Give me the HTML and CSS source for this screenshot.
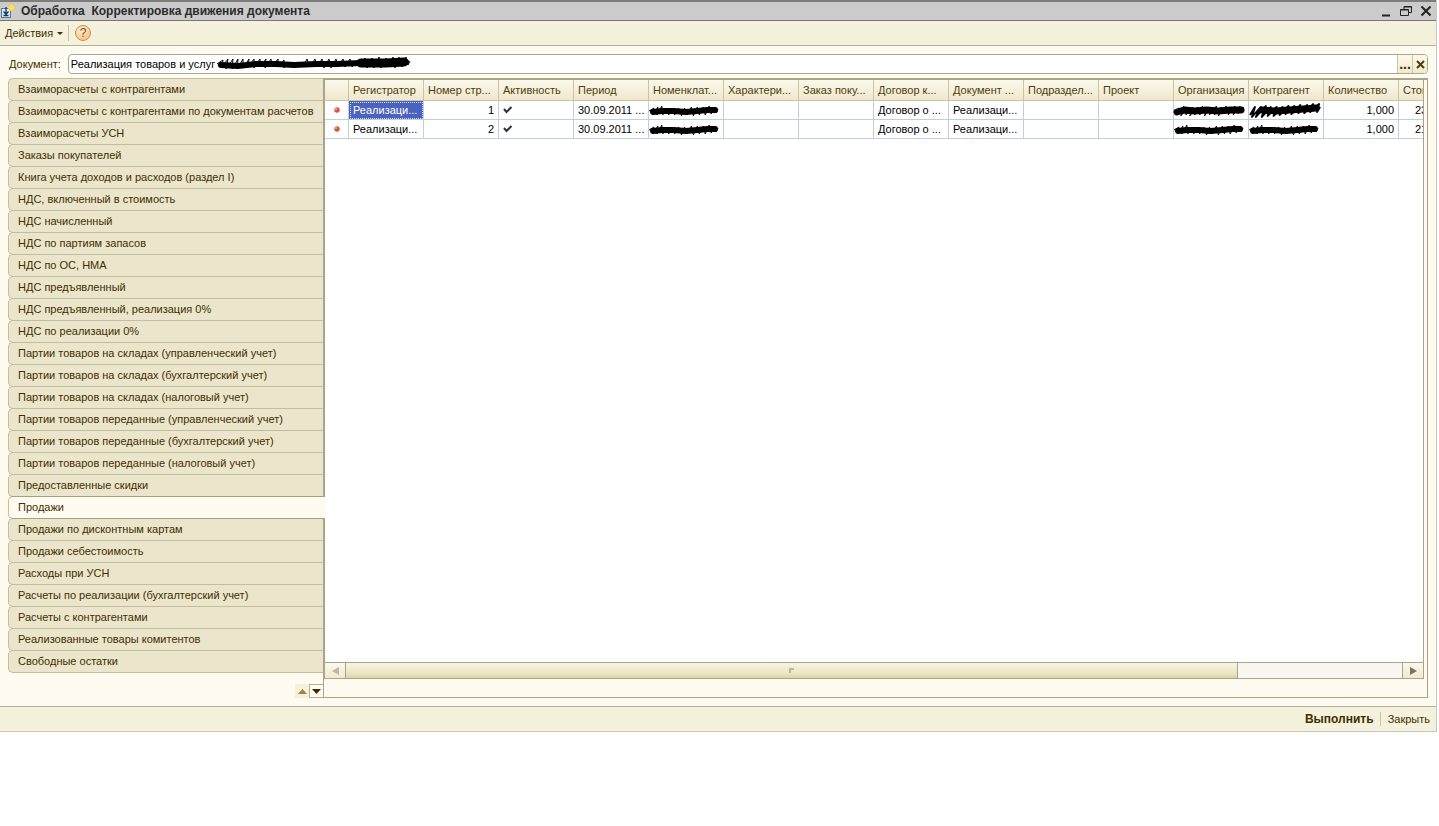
FILE: index.html
```html
<!DOCTYPE html>
<html lang="ru">
<head>
<meta charset="utf-8">
<title>Обработка Корректировка движения документа</title>
<link rel="stylesheet" href="styles.css">
</head>
<body>
<svg class="defs" aria-hidden="true">
  <symbol id="strike" viewBox="0 0 75 15">
    <path d="M4 9 L12 7 L22 8 L34 7 L46 8 L58 7 L69 7" fill="none" stroke="#000" stroke-width="7" stroke-linecap="round"/>
    <path d="M1 9 L6 5 L4 11 L11 3 L8 13 L15 4 L13 12 L20 4 L17 13 L25 4 L22 12 L30 3 L27 12 L34 4 L32 13 L39 4 L37 12 L44 3 L42 12 L49 4 L46 13 L54 3 L51 11 L58 4 L56 12 L63 3 L61 12 L68 3 L66 11 L71 4 L70 10 L72 7" fill="none" stroke="#000" stroke-linejoin="round"/>
  </symbol>
  <symbol id="strike-rise" viewBox="0 0 75 15">
    <path d="M14 7 L28 8 L42 7 L56 6 L69 5" fill="none" stroke="#000" stroke-width="7" stroke-linecap="round"/>
    <path d="M2 12 L7 4 L4 14 L13 4 L8 14 L18 3 L14 14 L23 4 L20 13 L29 4 L26 13 L35 4 L32 12 L41 3 L38 11 L47 3 L44 11 L53 2 L51 10 L60 2 L57 10 L66 1 L63 9 L72 1 L70 9 L73 4" fill="none" stroke="#000" stroke-width="2" stroke-linejoin="round"/>
  </symbol>
  <symbol id="strike-thin" viewBox="0 0 75 15">
    <path d="M5 9 L14 8 L26 8 L38 9 L50 8 L60 7 L68 7" fill="none" stroke="#000" stroke-width="6" stroke-linecap="round"/>
    <path d="M1 8 L6 5 L5 12 L10 4 L9 12 L14 3 L15 12 L19 5 L21 12 L25 5 L27 12 L31 5 L34 13 L37 5 L40 12 L44 4 L46 13 L50 4 L52 12 L56 4 L58 12 L62 3 L64 11 L68 4 L69 10 L71 6" fill="none" stroke="#000" stroke-linejoin="round"/>
  </symbol>
  <symbol id="strike-long" viewBox="0 0 196 16">
    <path d="M5 10 L22 11 L40 9 L60 9 L78 10 L100 9 L120 9 L145 8 L170 7 L190 7" fill="none" stroke="#000" stroke-width="6" stroke-linecap="round"/>
    <path d="M145 8 L170 8 L188 7" fill="none" stroke="#000" stroke-width="9" stroke-linecap="round"/>
    <path d="M1 9 L7 5 L6 12 L12 4 L10 14 L17 4 L16 14 L22 4 L21 14 L27 4 L27 13 L33 4 L32 12 L38 4 L38 13 L44 4 L44 12 L50 4 L49 13 L55 4 L56 12 L62 4 L62 12 L68 5 L68 13 L74 7 L77 12 L83 7 L87 12 L91 4 L94 12 L99 4 L101 12 L106 4 L108 13 L113 4 L115 13 L120 4 L122 12 L127 4 L129 12 L134 4 L136 12 L142 5 L144 12 L149 3 L151 13 L156 3 L158 13 L163 2 L165 13 L170 3 L172 12 L177 2 L179 13 L183 2 L186 12 L190 2 L192 10 L194 6" fill="none" stroke="#000" stroke-linejoin="round"/>
  </symbol>
  <symbol id="tick" viewBox="0 0 10 10">
    <path d="M1 4 L3.500 7 L8.500 2" fill="none" stroke="#333" stroke-width="2"/>
  </symbol>
  <symbol id="record" viewBox="0 0 8 8">
    <circle cx="4" cy="4" r="2.700" fill="#d8573f"/>
    <circle cx="3" cy="3" r="1" fill="#f6b5a2"/>
  </symbol>
</svg>

<div class="window">
  <header class="titlebar">
    <svg class="app-icon" viewBox="0 0 16 18" aria-hidden="true">
      <rect x="1.500" y="6.500" width="9" height="9" fill="#dbe8f2" stroke="#5b7890"/>
      <path d="M6 5v7M3.500 9.500 6 12.200 8.500 9.500M3.500 13.500h5" fill="none" stroke="#17385f" stroke-width="1.300"/>
      <path d="M11.500 1.500l4 4-4 4-4-4z" fill="#ffdf55" stroke="#e6c24a" stroke-width=".6"/>
    </svg>
    <h1 class="title">Обработка&nbsp; Корректировка движения документа</h1>
    <div class="window-buttons">
      <button class="window-button" type="button" aria-label="Свернуть"><svg viewBox="0 0 12 12"><path d="M2 10.500h8" stroke="#222" stroke-width="2"/></svg></button>
      <button class="window-button" type="button" aria-label="Восстановить"><svg viewBox="0 0 12 12"><path d="M4 4V1.500h7.500V7.500H9M4 2h7.500M.5 4.500h8v6h-8zM.5 5h8" fill="none" stroke="#222"/></svg></button>
      <button class="window-button" type="button" aria-label="Закрыть окно"><svg viewBox="0 0 12 12"><path d="M1.500 1.500l9 9M10.500 1.500l-9 9" stroke="#222" stroke-width="2"/></svg></button>
    </div>
  </header>

  <div class="toolbar">
    <button class="menu-button" type="button">Действия<span class="caret"></span></button>
    <button class="help-button" type="button" aria-label="Справка">?</button>
  </div>

  <main class="content">
    <div class="document-row">
      <label for="document">Документ:</label>
      <div class="field">
        <input id="document" type="text" value="Реализация товаров и услуг">
        <svg class="field-strike" aria-hidden="true"><use href="#strike-long"/></svg>
        <button class="field-button dots" type="button" aria-label="Выбрать">...</button>
        <button class="field-button" type="button" aria-label="Очистить"><svg viewBox="0 0 9 9"><path d="M1 1l7 7M8 1L1 8" stroke="#4d3d08" stroke-width="2"/></svg></button>
      </div>
    </div>

    <div class="pages">
      <div class="side">
        <div class="tabs" role="tablist" aria-orientation="vertical">
          <button class="tab" type="button" role="tab">Взаиморасчеты с контрагентами</button>
          <button class="tab" type="button" role="tab">Взаиморасчеты с контрагентами по документам расчетов</button>
          <button class="tab" type="button" role="tab">Взаиморасчеты УСН</button>
          <button class="tab" type="button" role="tab">Заказы покупателей</button>
          <button class="tab" type="button" role="tab">Книга учета доходов и расходов (раздел I)</button>
          <button class="tab" type="button" role="tab">НДС, включенный в стоимость</button>
          <button class="tab" type="button" role="tab">НДС начисленный</button>
          <button class="tab" type="button" role="tab">НДС по партиям запасов</button>
          <button class="tab" type="button" role="tab">НДС по ОС, НМА</button>
          <button class="tab" type="button" role="tab">НДС предъявленный</button>
          <button class="tab" type="button" role="tab">НДС предъявленный, реализация 0%</button>
          <button class="tab" type="button" role="tab">НДС по реализации 0%</button>
          <button class="tab" type="button" role="tab">Партии товаров на складах (управленческий учет)</button>
          <button class="tab" type="button" role="tab">Партии товаров на складах (бухгалтерский учет)</button>
          <button class="tab" type="button" role="tab">Партии товаров на складах (налоговый учет)</button>
          <button class="tab" type="button" role="tab">Партии товаров переданные (управленческий учет)</button>
          <button class="tab" type="button" role="tab">Партии товаров переданные (бухгалтерский учет)</button>
          <button class="tab" type="button" role="tab">Партии товаров переданные (налоговый учет)</button>
          <button class="tab" type="button" role="tab">Предоставленные скидки</button>
          <button class="tab selected" type="button" role="tab" aria-selected="true">Продажи</button>
          <button class="tab" type="button" role="tab">Продажи по дисконтным картам</button>
          <button class="tab" type="button" role="tab">Продажи себестоимость</button>
          <button class="tab" type="button" role="tab">Расходы при УСН</button>
          <button class="tab" type="button" role="tab">Расчеты по реализации (бухгалтерский учет)</button>
          <button class="tab" type="button" role="tab">Расчеты с контрагентами</button>
          <button class="tab" type="button" role="tab">Реализованные товары комитентов</button>
          <button class="tab" type="button" role="tab">Свободные остатки</button>
        </div>
        <div class="tab-scroll">
          <button class="tab-arrow" type="button" aria-label="Вверх"><svg viewBox="0 0 9 5"><path d="M0 5h9L4.500 0z" fill="#9c8442"/></svg></button>
          <button class="tab-arrow active" type="button" aria-label="Вниз"><svg viewBox="0 0 9 5"><path d="M0 0h9L4.500 5z" fill="#3a2c00"/></svg></button>
        </div>
      </div>

      <section class="panel" role="tabpanel" aria-label="Продажи">
        <div class="grid">
          <div class="grid-view">
            <table class="records">
              <colgroup><col class="col-mark"><col span="15"></colgroup>
              <thead>
                <tr><th></th><th>Регистратор</th><th>Номер стр...</th><th>Активность</th><th>Период</th><th>Номенклат...</th><th>Характери...</th><th>Заказ поку...</th><th>Договор к...</th><th>Документ ...</th><th>Подраздел...</th><th>Проект</th><th>Организация</th><th>Контрагент</th><th>Количество</th><th>Стоимость</th></tr>
              </thead>
              <tbody>
                <tr>
                  <td class="mark"><svg><use href="#record"/></svg></td><td class="current">Реализаци...</td><td class="number">1</td><td class="check"><svg><use href="#tick"/></svg></td><td>30.09.2011 ...</td>
                  <td class="hidden-value"><svg><use href="#strike-thin"/></svg></td><td></td><td></td><td>Договор о ...</td><td>Реализаци...</td><td></td><td></td>
                  <td class="hidden-value"><svg><use href="#strike"/></svg></td><td class="hidden-value"><svg><use href="#strike-rise"/></svg></td><td class="number">1,000</td><td class="cost">23</td>
                </tr>
                <tr>
                  <td class="mark"><svg><use href="#record"/></svg></td><td>Реализаци...</td><td class="number">2</td><td class="check"><svg><use href="#tick"/></svg></td><td>30.09.2011 ...</td>
                  <td class="hidden-value"><svg><use href="#strike-thin"/></svg></td><td></td><td></td><td>Договор о ...</td><td>Реализаци...</td><td></td><td></td>
                  <td class="hidden-value"><svg><use href="#strike-thin"/></svg></td><td class="hidden-value"><svg><use href="#strike-thin"/></svg></td><td class="number">1,000</td><td class="cost">21</td>
                </tr>
              </tbody>
            </table>
          </div>
          <div class="scrollbar">
            <button class="scroll-end left" type="button" aria-label="Влево"><svg viewBox="0 0 7 8"><path d="M7 0v8L0 4z" fill="#bdb9a8"/></svg></button>
            <div class="track"><div class="thumb"><svg viewBox="0 0 5 5"><path d="M0 5V0h5v2H2v3z" fill="#bbb89f"/></svg></div></div>
            <button class="scroll-end right" type="button" aria-label="Вправо"><svg viewBox="0 0 7 8"><path d="M0 0v8l7-4z" fill="#77745f"/></svg></button>
          </div>
        </div>
      </section>
    </div>
  </main>

  <footer class="actions">
    <button class="action primary" type="button">Выполнить</button>
    <button class="action" type="button">Закрыть</button>
  </footer>
</div>
</body>
</html>
```
FILE: styles.css
```css
* {
  box-sizing: border-box;
}

body {
  margin: 0;
  background: #fff;
  color: #3f2f00;
  font: 11px/14px "Liberation Sans", Arial, sans-serif;
}

button,
input {
  margin: 0;
  padding: 0;
  border: 0;
  border-radius: 0;
  background: none;
  color: inherit;
  font: inherit;
}

svg {
  display: block;
}

.defs {
  position: absolute;
  width: 0;
  height: 0;
}

.window {
  margin-right: 2px;
  border-right: 1px solid #c9c7bd;
  background: #fffbf0;
}

.titlebar {
  display: flex;
  align-items: center;
  height: 21px;
  padding-right: 4px;
  border-top: 2px solid #7d7d7a;
  border-bottom: 1px solid #77776f;
  background: #cbcbcb;
}

.app-icon {
  width: 16px;
  height: 18px;
}

.title {
  flex: 1;
  margin: 0 0 0 5px;
  color: #2b2b2b;
  font-size: 12px;
  font-weight: bold;
  line-height: 16px;
}

.window-buttons {
  display: flex;
  gap: 8px;
}

.window-button svg {
  width: 12px;
  height: 12px;
}

.toolbar {
  display: flex;
  align-items: center;
  height: 25px;
  padding-left: 5px;
  border-bottom: 1px solid #b5b196;
  background: #f4f1dd;
}

.menu-button {
  display: flex;
  align-items: center;
  gap: 4px;
}

.caret {
  border: 3px solid transparent;
  border-top-color: #3f2f00;
  border-bottom: 0;
}

.help-button {
  width: 16px;
  height: 16px;
  margin-left: 12px;
  border: 1px solid #cf8f4e;
  border-radius: 50%;
  background: radial-gradient(circle at 40% 30%, #fff0d6, #f6b770);
  color: #7a4a1c;
  font-size: 12px;
  line-height: 14px;
  position: relative;
}

.help-button::before {
  content: "";
  position: absolute;
  top: -1px;
  left: -8px;
  height: 16px;
  border-left: 1px solid #c3c3b0;
}

.content {
  padding: 8px;
}

.document-row {
  display: flex;
  align-items: center;
  gap: 7px;
  padding-left: 1px;
  margin-bottom: 4px;
}

.field {
  position: relative;
  display: flex;
  flex: 1;
  height: 20px;
  overflow: hidden;
  border: 1px solid #aba78c;
  border-radius: 4px;
  background: #fff;
}

.field input {
  flex: 1;
  min-width: 0;
  padding-left: 2px;
  color: #000;
}

.field-strike {
  position: absolute;
  top: 0;
  left: 147px;
  width: 196px;
  height: 16px;
}

.field-button {
  display: flex;
  align-items: center;
  justify-content: center;
  width: 15px;
  border-left: 1px solid #c9c5a8;
  background: linear-gradient(#fdfaee, #efe9cb);
  font-weight: bold;
}

.field-button svg {
  width: 9px;
  height: 9px;
}

.dots {
  font-size: 14px;
}

.pages {
  display: flex;
}

.side {
  display: flex;
  flex: 0 0 315px;
  flex-direction: column;
  justify-content: space-between;
  gap: 12px;
}

.tabs {
  display: flex;
  flex-direction: column;
}

.tab {
  height: 23px;
  margin-bottom: -1px;
  padding: 0 0 1px 9px;
  border: 1px solid #c2bd9c;
  border-right: 0;
  border-radius: 5px 0 0 5px;
  background: #ebe5cb;
  text-align: left;
  white-space: nowrap;
}

.selected {
  position: relative;
  z-index: 1;
  margin-right: -2px;
  border-color: #a5a080;
  border-left-color: #e2b878;
  background: #fffbf0;
}

.tab-scroll {
  display: flex;
  justify-content: flex-end;
}

.tab-arrow {
  display: flex;
  align-items: center;
  justify-content: center;
  width: 14px;
  height: 14px;
  background: #f5f0d8;
}

.tab-arrow svg {
  width: 9px;
  height: 5px;
}

.tab-arrow.active {
  border: 1px solid #b5b08e;
  border-right: 0;
  background: #fffdf2;
}

.panel {
  display: flex;
  flex: 1;
  min-width: 0;
  padding: 0 3px 18px 0;
  border: 1px solid #a9a58a;
  border-top-width: 2px;
}

.grid {
  display: flex;
  flex: 1;
  flex-direction: column;
  min-width: 0;
  border-right: 1px solid #a9a58a;
  border-left: 1px solid #a9a58a;
}

.grid-view {
  flex: 1;
  overflow: hidden;
  background: #fff;
}

.records {
  width: 1149px;
  border-collapse: separate;
  border-spacing: 0;
  table-layout: fixed;
}

.col-mark {
  width: 24px;
}

.records th,
.records td {
  padding: 0 4px;
  border-right: 1px solid #c0cfdf;
  border-bottom: 1px solid #c0cfdf;
  text-align: left;
  white-space: nowrap;
}

.records th {
  height: 21px;
  padding-right: 0;
  border-color: #c8c4a6;
  background: linear-gradient(#fbf8ec, #efe8cc);
  color: #4f3d0a;
  font-weight: normal;
}

.records td {
  height: 19px;
  color: #000;
}

.records .current {
  outline: 1px dotted #d8def5;
  outline-offset: -2px;
  background: #4a63be;
  color: #fff;
}

.records .number {
  text-align: right;
}

.records .cost {
  padding-left: 16px;
}

.mark svg {
  width: 8px;
  height: 8px;
  margin: 0 auto;
}

.check svg {
  width: 10px;
  height: 10px;
}

.hidden-value {
  position: relative;
}

.hidden-value svg {
  position: absolute;
  top: 2px;
  left: -1px;
  width: 74px;
  height: 15px;
}

.scrollbar {
  display: flex;
  height: 17px;
  border-top: 1px solid #a9a58a;
  border-bottom: 1px solid #a9a58a;
  background: #f9f7f0;
}

.scroll-end {
  display: flex;
  align-items: center;
  justify-content: center;
  width: 21px;
  background: linear-gradient(#fbf9ec, #efe9cd);
}

.scroll-end svg {
  width: 7px;
  height: 8px;
}

.left {
  border-right: 1px solid #a9a58a;
}

.right {
  border-left: 1px solid #a9a58a;
}

.track {
  flex: 1;
}

.thumb {
  display: flex;
  align-items: center;
  justify-content: center;
  width: 84.5%;
  height: 15px;
  border-right: 1px solid #a9a58a;
  background: linear-gradient(#f7f4e2, #eee8c9 60%, #ddd5a9);
}

.thumb svg {
  width: 5px;
  height: 5px;
}

.actions {
  display: flex;
  align-items: center;
  justify-content: flex-end;
  height: 26px;
  border-top: 1px solid #b5b196;
  border-bottom: 1px solid #c9c7bd;
  background: #f4f1dd;
}

.action {
  padding: 0 6px 0 7px;
}

.action + .action {
  border-left: 1px solid #c9c5a8;
}

.primary {
  font-size: 12px;
  font-weight: bold;
}
```
